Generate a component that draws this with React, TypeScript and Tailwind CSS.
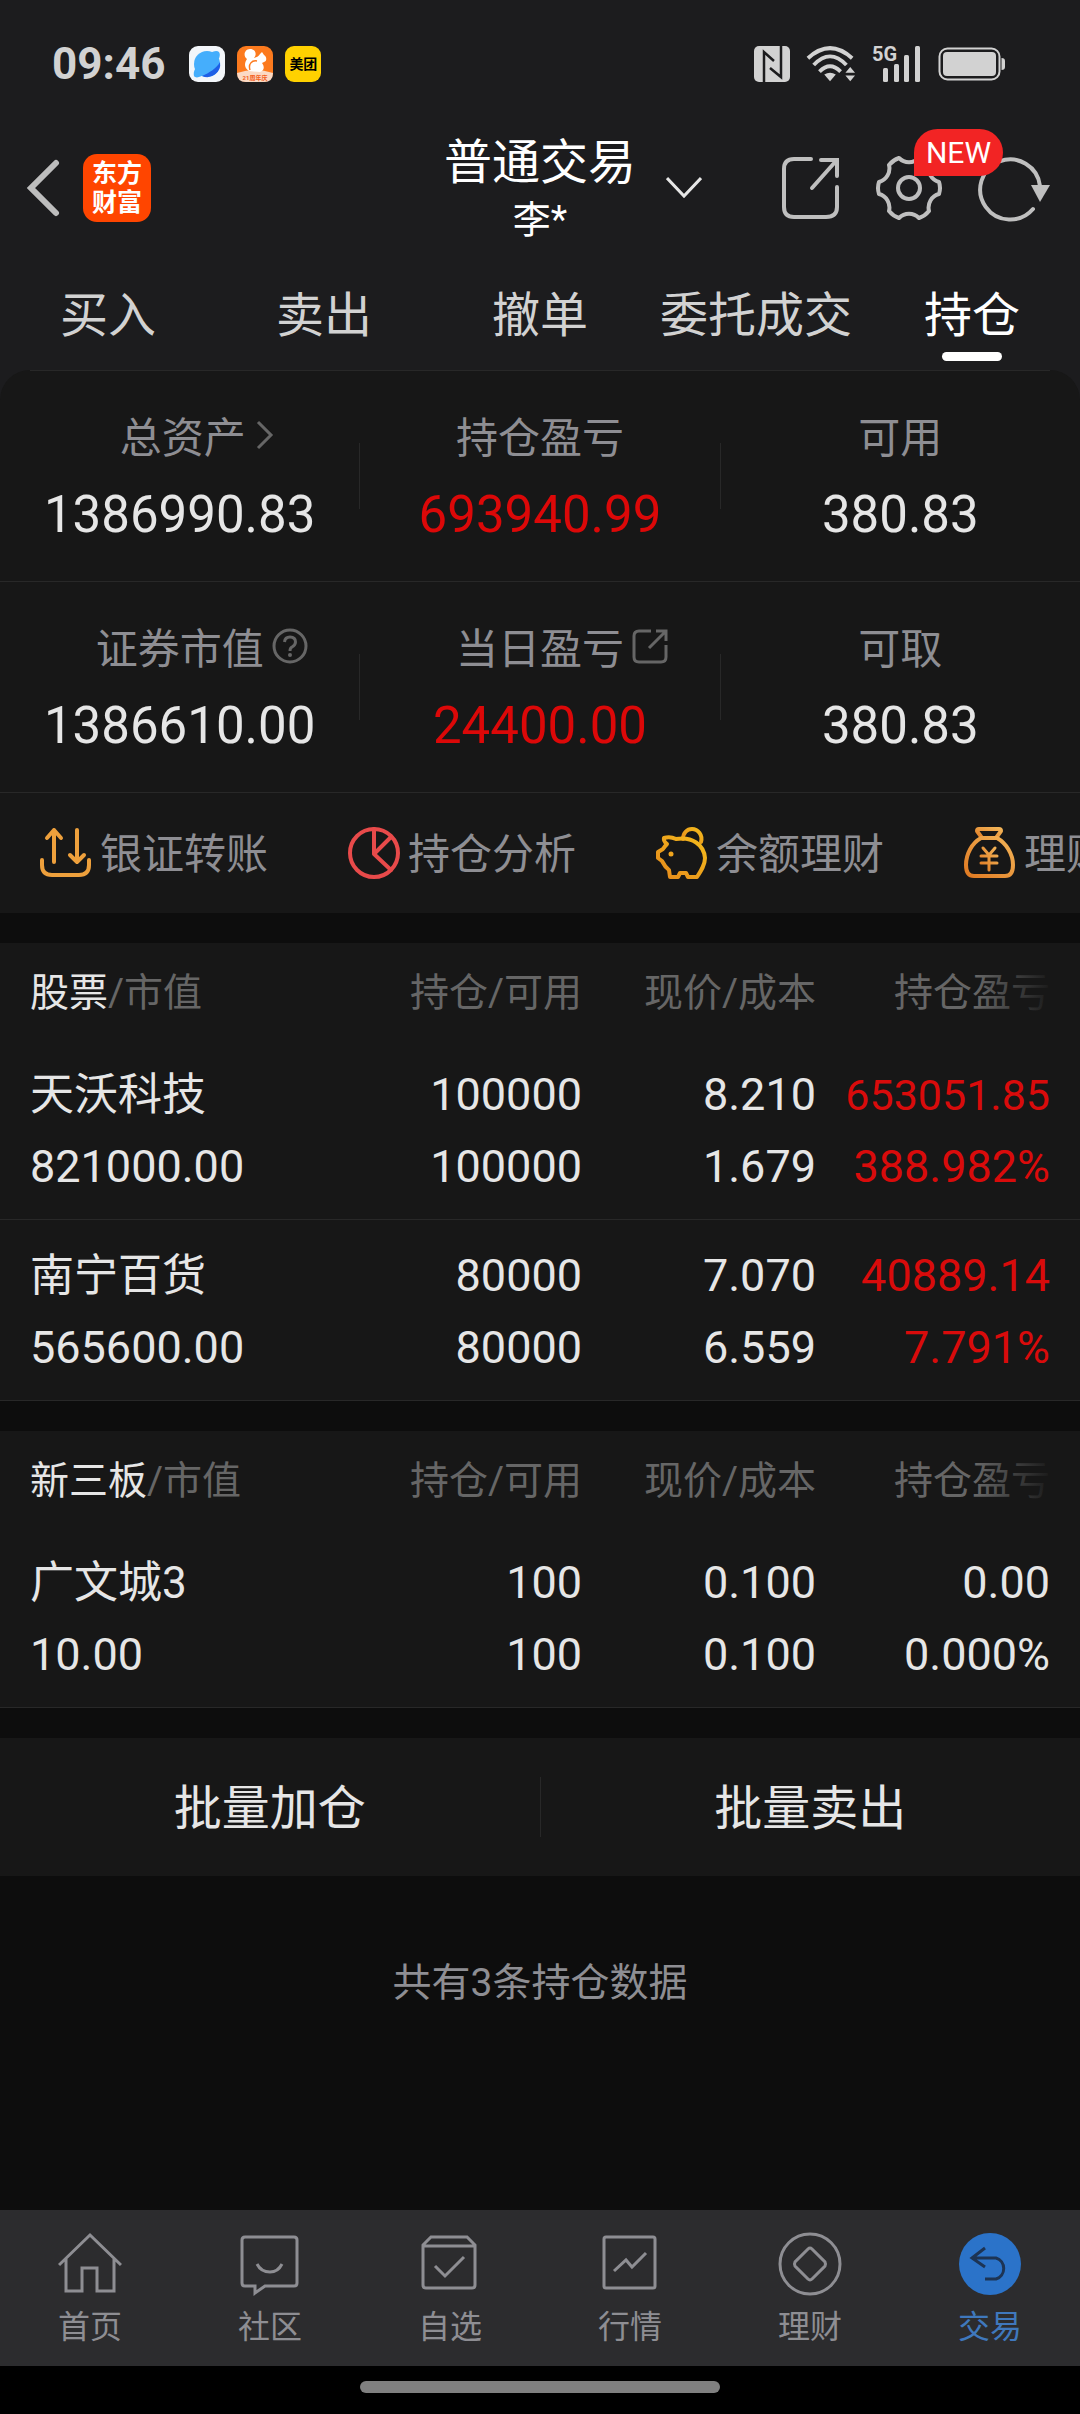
import React, { useState } from "react";

const tabs = ["买入", "卖出", "撤单", "委托成交", "持仓"];

const summary = [
  [
    { label: "总资产", value: "1386990.83", icon: "chevron" },
    { label: "持仓盈亏", value: "693940.99", red: true },
    { label: "可用", value: "380.83" },
  ],
  [
    { label: "证券市值", value: "1386610.00", icon: "help" },
    { label: "当日盈亏", value: "24400.00", red: true, icon: "share" },
    { label: "可取", value: "380.83" },
  ],
];

type Holding = {
  name: string;
  marketValue: string;
  amount: string;
  available: string;
  price: string;
  cost: string;
  profit: string;
  percent: string;
  up?: boolean;
};

const stocks: Holding[] = [
  {
    name: "天沃科技",
    marketValue: "821000.00",
    amount: "100000",
    available: "100000",
    price: "8.210",
    cost: "1.679",
    profit: "653051.85",
    percent: "388.982%",
    up: true,
  },
  {
    name: "南宁百货",
    marketValue: "565600.00",
    amount: "80000",
    available: "80000",
    price: "7.070",
    cost: "6.559",
    profit: "40889.14",
    percent: "7.791%",
    up: true,
  },
];

const otc: Holding[] = [
  {
    name: "广文城3",
    marketValue: "10.00",
    amount: "100",
    available: "100",
    price: "0.100",
    cost: "0.100",
    profit: "0.00",
    percent: "0.000%",
  },
];

const StatusBar = () => (
  <div className="flex h-32 items-center justify-between pl-[52px] pr-[74px] text-[#d2d2d2]">
    <div className="flex items-center gap-3">
      <span className="mr-3 text-[44px] leading-none font-bold">09:46</span>
      <svg className="h-9 w-9" viewBox="0 0 36 36">
        <rect width="36" height="36" rx="9" fill="#f3f6fa" />
        <path d="M5 30C4 26 6 22 9 19L20 8C24 5 28 4 30 6C32 9 30 13 27 17L17 27C12 31 7 33 5 30Z" fill="#45aefc" />
        <circle cx="18" cy="18" r="13" fill="#45aefc" />
        <path d="M31 16A13 13 0 0 1 13 30C20 27 28 22 31 16Z" fill="#1e5fe6" />
      </svg>
      <svg className="h-9 w-9" viewBox="0 0 36 36">
        <rect width="36" height="36" rx="9" fill="#fc7a1e" />
        <path d="M0 27Q18 21 36 27Q36 36 27 36H9Q0 36 0 27Z" fill="#fbd9c4" />
        <path
          d="M12 25C6 21 8 16 10 13C6 11 7 3 13 3C19 3 20 9 17 12C20 11 22 10 23 8L25 6L27 9C30 11 30 15 27 16L25 17C28 21 27 25 23 26Z"
          fill="#fff"
        />
        <path d="M13 24C11 18 15 14 20 15" fill="none" stroke="#fc7a1e" strokeWidth="1.5" />
        <text x="18" y="34" fontSize="6" fontWeight="700" textAnchor="middle" fill="#f4601a">
          21周年庆
        </text>
      </svg>
      <span className="flex h-9 w-9 items-center justify-center rounded-[9px] bg-[#ffd100] text-[14px] leading-none font-bold text-black">
        美团
      </span>
    </div>
    <div className="flex items-center gap-4">
      <svg className="h-9 w-9" viewBox="0 0 36 36">
        <rect width="36" height="36" rx="5" fill="currentColor" />
        <path d="M10 36V6L20 15M16 22L27 31V0" fill="none" stroke="#1c1c1e" strokeWidth="2.5" />
      </svg>
      <svg className="h-10 w-[50px]" viewBox="0 0 52 40" fill="none" stroke="currentColor" strokeWidth="4">
        <path d="M2 14Q25 -7 48 14M8 21Q25 3 42 21M14 28Q25 17 36 28" />
        <path d="M19 31Q25 27 31 31L25 38Z" fill="currentColor" stroke="none" />
        <path d="M41 29H51L46 23ZM41 32H51L46 38Z" fill="currentColor" stroke="none" />
      </svg>
      <svg className="h-10 w-[50px] overflow-visible" viewBox="0 0 50 40" fill="currentColor">
        <text x="0" y="17" fontSize="20" fontWeight="700">
          5G
        </text>
        <rect x="11" y="24" width="5" height="14" rx="1.5" />
        <rect x="22" y="20" width="5" height="18" rx="1.5" />
        <rect x="32" y="11" width="5" height="27" rx="1.5" />
        <rect x="43" y="2" width="5" height="36" rx="1.5" />
      </svg>
      <svg className="h-9 w-[68px]" viewBox="0 0 68 36">
        <rect x="1.5" y="2.5" width="60" height="31" rx="8" fill="none" stroke="currentColor" strokeWidth="2" />
        <rect x="5" y="6" width="53" height="24" rx="4" fill="currentColor" />
        <path d="M63.500 12Q67 12 67 15V21Q67 24 63.500 24Z" fill="currentColor" />
      </svg>
    </div>
  </div>
);

const Header = () => (
  <header className="grid h-[120px] grid-cols-[1fr_192px_1fr] items-center">
    <div className="flex items-center pl-6">
      <button aria-label="返回">
        <svg className="h-[60px] w-9" viewBox="0 0 36 60" fill="none" stroke="#bdbdbd" strokeWidth="6">
          <path d="M32 5L7 30L32 55" strokeLinecap="round" strokeLinejoin="miter" />
        </svg>
      </button>
      <a
        href="#home"
        className="ml-[23px] flex h-[68px] w-[68px] flex-col items-center justify-center rounded-[14px] bg-[#ff4500] text-[25px] leading-[29px] font-bold text-white"
      >
        <span>东方</span>
        <span>财富</span>
      </a>
    </div>
    <div className="flex flex-col items-center pt-1.5 text-white">
      <h1 className="text-[48px] leading-[58px]">普通交易</h1>
      <span className="text-[38px] leading-[56px]">李*</span>
    </div>
    <div className="flex items-center pl-[30px] pr-7">
      <button aria-label="切换账户">
        <svg className="h-6 w-9" viewBox="0 0 36 24" fill="none" stroke="#e6e6e6" strokeWidth="3">
          <path d="M1 2L18 20L35 2" />
        </svg>
      </button>
      <div className="ml-auto flex items-center gap-9 text-[#bfbfbf]">
        <button aria-label="分享">
          <svg className="h-[66px] w-[60px]" viewBox="0 0 60 66" fill="none" stroke="currentColor" strokeWidth="4" strokeLinecap="round">
            <path d="M31 4H14Q4 4 4 14V52Q4 62 14 62H46Q57 62 57 52V32" />
            <path d="M41 5H57V21M56 6L32 33" />
          </svg>
        </button>
        <button aria-label="设置" className="relative">
          <svg className="h-[66px] w-[66px]" viewBox="0 0 66 66" fill="none" stroke="currentColor" strokeWidth="4" strokeLinejoin="round">
            <path d="M63 27Q65 33 63 39A14 14 0 0 0 53 56Q49 61 43 63A14 14 0 0 0 23 63Q17 61 13 56A14 14 0 0 0 3 39Q1 33 3 27A14 14 0 0 0 13 10Q17 5 23 3A14 14 0 0 0 43 3Q49 5 53 10A14 14 0 0 0 63 27Z" />
            <circle cx="33" cy="33" r="11" />
          </svg>
          <span className="absolute -top-[26px] left-[38px] z-10 flex h-[47px] w-[89px] items-center justify-center rounded-3xl rounded-bl-none bg-[#f22424] text-[30px] text-white">
            NEW
          </span>
        </button>
        <button aria-label="刷新">
          <svg className="h-[72px] w-[74px]" viewBox="0 0 74 72" fill="none" stroke="currentColor" strokeWidth="4">
            <path d="M55 57A30 30 0 1 1 62 34" strokeLinecap="round" />
            <path d="M53 33H72L62 50Z" fill="currentColor" stroke="none" />
          </svg>
        </button>
      </div>
    </div>
  </header>
);

const LabelIcon = ({ name }: { name: string }) => {
  if (name === "chevron") {
    return (
      <svg className="h-9 w-9" viewBox="0 0 36 36" fill="none" stroke="#666" strokeWidth="3">
        <path d="M4 5L17 18L4 31" />
      </svg>
    );
  }
  if (name === "help") {
    return (
      <svg className="h-9 w-9" viewBox="0 0 36 36" fill="none" stroke="#666" strokeWidth="3">
        <circle cx="18" cy="18" r="16" />
        <path d="M12.500 14Q13 9 18 9Q23.500 9 23.500 14Q23.500 17 20 19Q18 20 18 23" />
        <circle cx="18" cy="27" r="2" fill="#666" stroke="none" />
      </svg>
    );
  }
  return (
    <svg className="h-9 w-9" viewBox="0 0 36 36" fill="none" stroke="#666" strokeWidth="3">
      <path d="M19 3H7Q2 3 2 8V29Q2 34 7 34H29Q34 34 34 29V17" />
      <path d="M24 3H34V13M34 3L17 20" />
    </svg>
  );
};

const Summary = () => (
  <>
    {summary.map((row, i) => (
      <div key={i} className="flex items-center border-b border-[#282828]">
        {row.map((cell, j) => (
          <React.Fragment key={cell.label}>
            {j > 0 && <div className="h-[66px] w-px bg-[#282828]" />}
            <div className="flex flex-1 flex-col items-center pt-[38px] pb-9">
              <div
                className={
                  cell.icon === "chevron"
                    ? "relative pl-1.5 text-[42px] leading-[60px] text-[#8e8e93]"
                    : "relative text-[42px] leading-[60px] text-[#8e8e93]"
                }
              >
                {cell.label}
                {cell.icon && (
                  <span className="absolute top-2 left-full ml-2">
                    <LabelIcon name={cell.icon} />
                  </span>
                )}
              </div>
              <div
                className={
                  cell.red
                    ? "mt-4 text-[51px] leading-[60px] text-[#dc0808]"
                    : "mt-4 text-[51px] leading-[60px] text-[#e6e6e6]"
                }
              >
                {cell.value}
              </div>
            </div>
          </React.Fragment>
        ))}
      </div>
    ))}
  </>
);

const actions = [
  {
    label: "银证转账",
    icon: (
      <g stroke="#eea03c">
        <path d="M2 33V38Q2 48 12 48H39Q49 48 49 38V33" />
        <path d="M14 35V3M7 11L14 3L21 11M37 3V35M30 28L37 35L44 28" />
      </g>
    ),
  },
  {
    label: "持仓分析",
    icon: (
      <g stroke="#e84a4a">
        <circle cx="26" cy="26" r="24" />
        <path d="M26 2V27L43 10M26 27L43 43" />
      </g>
    ),
  },
  {
    label: "余额理财",
    icon: (
      <g stroke="url(#gold)">
        <path d="M27 12C27 6 31 2 36 2C42 2 47 8 45 15" />
        <path d="M8 11Q14 9 20 12C36 9 48 18 49 31C49 38 45 44 41 50H32L30 46H24L22 50H14L13 43Q9 40 6 34L2 31V25L7 22Q9 19 11 17Q7 14 8 11Z" />
        <circle cx="15" cy="27" r="2.500" fill="#f0a51e" stroke="none" />
      </g>
    ),
  },
  {
    label: "理财",
    icon: (
      <g stroke="url(#gold2)">
        <path d="M18 11L13 4Q13 2 15 2H35Q37 2 37 4L32 11" />
        <path d="M17 11H33C42 16 49 27 49 38Q49 49 41 49H10Q2 49 2 38C2 27 8 16 17 11Z" />
        <path d="M19 21L25 28L31 21M25 28V43M17 29H33M17 36H33" strokeWidth="3" />
      </g>
    ),
  },
];

const QuickActions = () => (
  <div className="flex h-[120px] items-center gap-20 overflow-hidden pl-10">
    {actions.map((a) => (
      <button key={a.label} className="flex shrink-0 items-center gap-2 text-[42px] whitespace-nowrap text-[#8e8e93]">
        <svg className="h-[52px] w-[52px]" viewBox="0 0 52 52" fill="none" strokeWidth="4" strokeLinecap="round" strokeLinejoin="round">
          <defs>
            <linearGradient id="gold" x1="0" y1="1" x2="1" y2="0">
              <stop offset="0" stopColor="#e58a1c" />
              <stop offset="1" stopColor="#f5bc1c" />
            </linearGradient>
            <linearGradient id="gold2" x1="0" y1="1" x2="1" y2="0">
              <stop offset="0" stopColor="#e07a22" />
              <stop offset="1" stopColor="#f2b458" />
            </linearGradient>
          </defs>
          {a.icon}
        </svg>
        <span className="pt-0.5">{a.label}</span>
      </button>
    ))}
  </div>
);

const HoldingTable = ({ title, rows }: { title: string; rows: Holding[] }) => (
  <section className="mt-[30px] bg-[#171717]">
    <table className="w-full table-fixed text-[45px] leading-[72px] text-[#e6e6e6]">
      <colgroup>
        <col />
        <col className="w-[234px]" />
        <col className="w-[234px]" />
        <col className="w-[264px]" />
      </colgroup>
      <thead>
        <tr className="h-24 text-right text-[39px] text-[#666]">
          <th className="pt-1 pl-[30px] text-left font-normal">
            <span className="text-[#e6e6e6]">{title}</span>/市值
          </th>
          <th className="pt-1 font-normal">持仓/可用</th>
          <th className="pt-1 font-normal">现价/成本</th>
          <th className="relative pt-1 pr-[30px] font-normal">
            持仓盈亏
            <span className="absolute inset-y-0 right-0 w-[104px] bg-gradient-to-r from-transparent to-[#171717] to-75%" />
          </th>
        </tr>
      </thead>
      <tbody>
        {rows.map((r) => (
          <tr key={r.name} className="border-b border-[#282828] text-right">
            <td className="pt-5 pb-4 pl-[30px] text-left">
              <div className="text-[44px]">{r.name}</div>
              <div>{r.marketValue}</div>
            </td>
            <td className="pt-5 pb-4">
              <div>{r.amount}</div>
              <div>{r.available}</div>
            </td>
            <td className="pt-5 pb-4">
              <div>{r.price}</div>
              <div>{r.cost}</div>
            </td>
            <td className={r.up ? "pt-5 pr-[30px] pb-4 text-[#d90b0b]" : "pt-5 pr-[30px] pb-4"}>
              <div className={r.profit.length > 8 ? "text-[43px]" : ""}>{r.profit}</div>
              <div>{r.percent}</div>
            </td>
          </tr>
        ))}
      </tbody>
    </table>
  </section>
);

const navItems = [
  {
    label: "首页",
    icon: <path d="M1 33L32 3L63 33M8 27V59H24V36H39V59H56V27" />,
  },
  {
    label: "社区",
    icon: (
      <>
        <path d="M7 5H56Q59 5 59 8V51Q59 54 56 54H27L17 61V54H7Q4 54 4 51V8Q4 5 7 5Z" />
        <path d="M19 32Q23 40 32 40Q40 40 44 32" />
      </>
    ),
  },
  {
    label: "自选",
    icon: (
      <>
        <path d="M5 13L13 5H49L57 13V53Q57 56 54 56H8Q5 56 5 53ZM5 14H57" />
        <path d="M17 34L27 44L46 25" />
      </>
    ),
  },
  {
    label: "行情",
    icon: (
      <>
        <rect x="6" y="5" width="51" height="51" rx="2" />
        <path d="M16 39L28 28L34 35L48 21" />
      </>
    ),
  },
  {
    label: "理财",
    icon: (
      <>
        <circle cx="32" cy="32" r="30" />
        <path d="M30 17Q32 15 34 17L47 30Q48 32 47 34L34 47Q32 49 30 47L17 34Q16 32 17 30Z" />
      </>
    ),
  },
  {
    label: "交易",
    icon: (
      <>
        <circle cx="32" cy="32" r="31" fill="#2b73c9" stroke="none" />
        <path d="M27 47H38A11 11 0 0 0 38 26H14M27 16L14 26L27 35" stroke="#1d3454" />
      </>
    ),
  },
];

const BottomNav = () => (
  <nav className="grid grid-cols-6 bg-[#2c2c2e]">
    {navItems.map((item) => (
      <a
        key={item.label}
        href={`#${item.label}`}
        className={
          item.label === "交易"
            ? "flex flex-col items-center pt-[22px] pb-4 text-[#3f78bd]"
            : "flex flex-col items-center pt-[22px] pb-4 text-[#8e8e93]"
        }
      >
        <svg className="h-16 w-16" viewBox="0 0 64 64" fill="none" stroke="currentColor" strokeWidth="3">
          {item.icon}
        </svg>
        <span className="mt-2 text-[32px] leading-[46px]">{item.label}</span>
      </a>
    ))}
  </nav>
);

const App = () => {
  const [active, setActive] = useState("持仓");

  return (
    <div className="flex min-h-screen flex-col bg-[#0d0d0d] font-['Roboto','Noto_Sans_CJK_SC',sans-serif]">
      <div className="bg-[#1c1c1e]">
        <StatusBar />
        <Header />
        <nav className="grid grid-cols-5">
          {tabs.map((tab) => (
            <button
              key={tab}
              onClick={() => setActive(tab)}
              className="flex flex-col items-center pt-10 pb-[9px] text-[48px] leading-[56px] whitespace-nowrap"
            >
              <span className={tab === active ? "text-white" : "text-[#d2d2d2]"}>{tab}</span>
              <span
                className={tab === active ? "mt-2 h-[9px] w-[60px] rounded-full bg-white" : "mt-2 h-[9px] w-[60px]"}
              />
            </button>
          ))}
        </nav>
        <section className="rounded-t-[30px] bg-[#171717]">
          <div className="mx-[30px] h-px bg-[#282828]" />
          <Summary />
          <QuickActions />
        </section>
      </div>

      <HoldingTable title="股票" rows={stocks} />
      <HoldingTable title="新三板" rows={otc} />

      <div className="mt-[30px] flex h-[138px] items-center bg-[#171717] text-[48px] text-[#e6e6e6]">
        <button className="h-full flex-1 pt-1">批量加仓</button>
        <div className="h-[60px] w-px bg-[#282828]" />
        <button className="h-full flex-1 pt-1">批量卖出</button>
      </div>
      <p className="mt-20 text-center text-[39px] leading-[54px] text-[#8e8e93]">共有3条持仓数据</p>

      <div className="mt-auto">
        <BottomNav />
        <div className="flex h-12 items-center justify-center bg-black pb-1.5">
          <div className="h-3 w-1/3 rounded-full bg-[#808080]" />
        </div>
      </div>
    </div>
  );
};

export default App;
